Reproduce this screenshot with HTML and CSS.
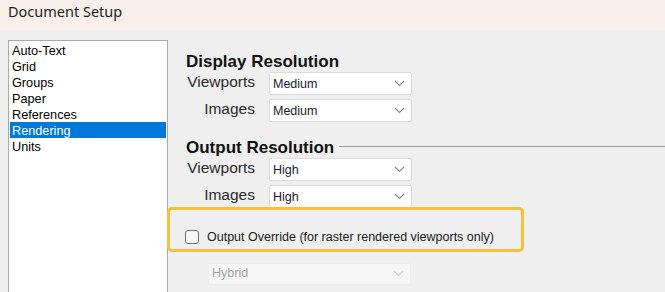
FILE: index.html
```html
<!DOCTYPE html>
<html lang="en">

<head>
    <meta charset="UTF-8">
    <meta name="viewport" content="width=device-width, initial-scale=1.0">
    <title>Document Setup</title>
    <link rel="stylesheet" href="styles.css">
</head>

<body>
    <div id="window">
        <div class="titlebar">Document Setup</div>
        <div class="content">
            <ul class="pages">
                <li>Auto-Text</li>
                <li>Grid</li>
                <li>Groups</li>
                <li>Paper</li>
                <li>References</li>
                <li class="selected">Rendering</li>
                <li>Units</li>
            </ul>
            <div class="panel">
                <div class="group">
                    <div class="group-title">Display Resolution</div>
                    <div class="row">
                        <label>Viewports</label>
                        <div class="select">Medium<svg class="chev" width="11" height="7" viewBox="0 0 11 7"><polyline points="1,1 5.5,5.5 10,1" /></svg></div>
                    </div>
                    <div class="row">
                        <label>Images</label>
                        <div class="select">Medium<svg class="chev" width="11" height="7" viewBox="0 0 11 7"><polyline points="1,1 5.5,5.5 10,1" /></svg></div>
                    </div>
                </div>
                <div class="group output">
                    <div class="group-title"><span>Output Resolution</span><span class="rule"></span></div>
                    <div class="row">
                        <label>Viewports</label>
                        <div class="select">High<svg class="chev" width="11" height="7" viewBox="0 0 11 7"><polyline points="1,1 5.5,5.5 10,1" /></svg></div>
                    </div>
                    <div class="row">
                        <label>Images</label>
                        <div class="select">High<svg class="chev" width="11" height="7" viewBox="0 0 11 7"><polyline points="1,1 5.5,5.5 10,1" /></svg></div>
                    </div>
                </div>
                <div class="override">
                    <span class="check"></span>
                    <span>Output Override (for raster rendered viewports only)</span>
                </div>
                <div class="select hybrid">Hybrid<svg class="chev" width="11" height="7" viewBox="0 0 11 7"><polyline points="1,1 5.5,5.5 10,1" /></svg></div>
            </div>
        </div>
    </div>
</body>

</html>
```

FILE: styles.css
```css
html,
body {
    margin: 0;
    height: 100%;
}

body {
    background: #efefef;
    font-family: "Liberation Sans", Arial, sans-serif;
    color: #111;
    overflow: hidden;
}

#window {
    width: 665px;
    height: 292px;
    display: flex;
    flex-direction: column;
    overflow: hidden;
}

.titlebar {
    height: 30px;
    flex: none;
    background: #f9efeb;
    font-family: "Noto Sans", "Open Sans", sans-serif;
    font-size: 14.5px;
    color: #1e1e1e;
    padding-left: 8px;
    line-height: 22px;
    box-sizing: border-box;
}

.content {
    flex: 1;
    display: flex;
    padding: 10px 0 0 8px;
}

.pages {
    list-style: none;
    margin: 0;
    padding: 1px;
    width: 160px;
    height: 270px;
    flex: none;
    box-sizing: border-box;
    background: #fff;
    border: 1px solid #a9a9a9;
    font-size: 12.7px;
    color: #000;
}

.pages li {
    height: 16px;
    line-height: 18px;
    overflow: hidden;
    padding-left: 2px;
}

.pages li.selected {
    background: #0078d7;
    color: #fff;
}

.panel {
    flex: 1;
    padding-top: 12px;
    display: flex;
    flex-direction: column;
}

.group {
    padding-left: 18px;
    display: flex;
    flex-direction: column;
    gap: 4px;
}

.group.output {
    margin-top: 16px;
}

.group-title {
    font-size: 17px;
    font-weight: bold;
    line-height: 20px;
    height: 20px;
    margin-bottom: -4px;
    display: flex;
    align-items: center;
    color: #111;
}

.rule {
    flex: 1;
    height: 1px;
    background: #a0a0a0;
    margin: 0 0 4px 5px;
}

.row {
    display: flex;
    align-items: center;
    height: 23px;
}

.row label {
    width: 69px;
    text-align: right;
    font-size: 15.5px;
    color: #2a2a2a;
    margin-right: 14px;
    padding-bottom: 3px;
}

.select {
    width: 143px;
    height: 23px;
    box-sizing: border-box;
    background: #fff;
    border: 1px solid #dadada;
    border-radius: 2px;
    font-size: 12.5px;
    color: #1c1c30;
    padding-left: 3px;
    display: flex;
    align-items: center;
    justify-content: space-between;
}

.chev {
    margin-right: 6px;
    fill: none;
    stroke: #8a8a8a;
    stroke-width: 1.2;
}

.override {
    margin: -1px 0 0 -1px;
    width: 357px;
    height: 45px;
    box-sizing: border-box;
    border: 3px solid #f5c03a;
    border-radius: 5px;
    padding: 20px 0 5px 15px;
    display: flex;
    align-items: center;
    gap: 8px;
    font-size: 12.5px;
    color: #1c1c1c;
}

.check {
    width: 14px;
    height: 14px;
    box-sizing: border-box;
    border: 1px solid #707070;
    border-radius: 3px;
    background: #f7f7f7;
    flex: none;
}

.hybrid {
    margin: 11px 0 0 40px;
    width: 203px;
    height: 22px;
    background: #f6f6f6;
    border-color: #ececec;
    color: #a2a2a2;
    padding-bottom: 2px;
}

.hybrid .chev {
    stroke: #cfcfcf;
}
```
